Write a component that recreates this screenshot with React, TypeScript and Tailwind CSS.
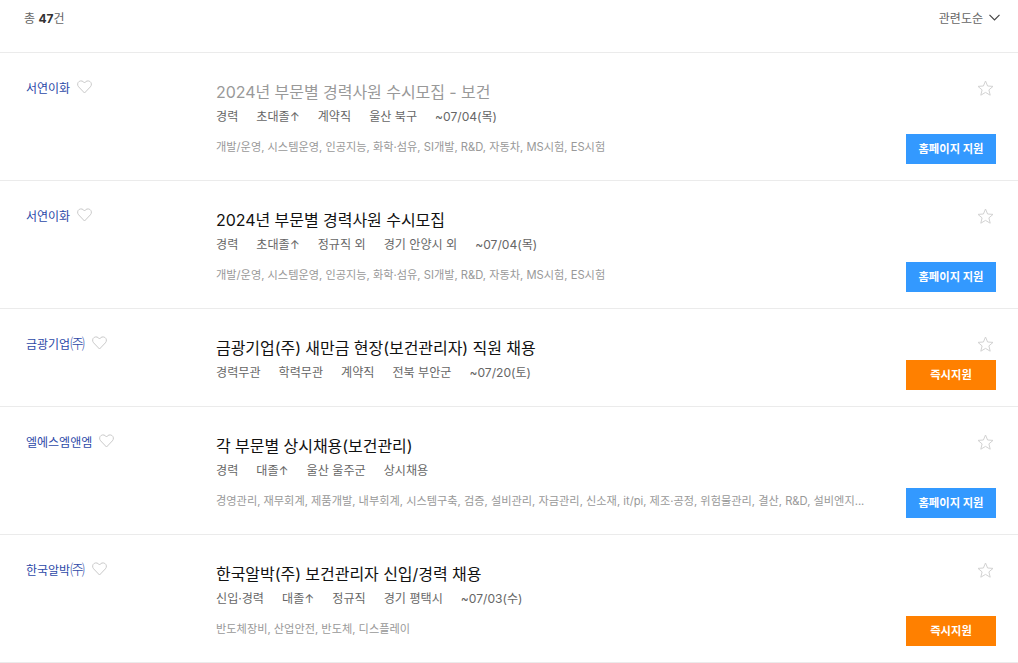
import React from "react";

interface Job {
  company: string;
  incorporated?: boolean;
  title: string;
  meta: string[];
  tags?: string;
  apply: "home" | "now";
  closed?: boolean;
}

const itTags = "개발/운영, 시스템운영, 인공지능, 화학·섬유, SI개발, R&D, 자동차, MS시험, ES시험";

const jobs: Job[] = [
  { company: "서연이화", title: "2024년 부문별 경력사원 수시모집 - 보건", meta: ["경력", "초대졸↑", "계약직", "울산 북구", "~07/04(목)"], tags: itTags, apply: "home", closed: true },
  { company: "서연이화", title: "2024년 부문별 경력사원 수시모집", meta: ["경력", "초대졸↑", "정규직 외", "경기 안양시 외", "~07/04(목)"], tags: itTags, apply: "home" },
  { company: "금광기업", incorporated: true, title: "금광기업(주) 새만금 현장(보건관리자) 직원 채용", meta: ["경력무관", "학력무관", "계약직", "전북 부안군", "~07/20(토)"], apply: "now" },
  { company: "엘에스엠앤엠", title: "각 부문별 상시채용(보건관리)", meta: ["경력", "대졸↑", "울산 울주군", "상시채용"], tags: "경영관리, 재무회계, 제품개발, 내부회계, 시스템구축, 검증, 설비관리, 자금관리, 신소재, it/pi, 제조·공정, 위험물관리, 결산, R&D, 설비엔지...", apply: "home" },
  { company: "한국알박", incorporated: true, title: "한국알박(주) 보건관리자 신입/경력 채용", meta: ["신입·경력", "대졸↑", "정규직", "경기 평택시", "~07/03(수)"], tags: "반도체장비, 산업안전, 반도체, 디스플레이", apply: "now" },
];

const Heart = () => (
  <svg width="15" height="14" viewBox="0 0 15 14" fill="none" stroke="#c9c9c9" strokeWidth="1" className="shrink-0">
    <path d="M7.5 13 L1.6 6.8 C0 5 0.4 2.6 2.2 1.4 C4 0.4 6.2 0.9 7.5 3 C8.8 0.9 11 0.4 12.8 1.4 C14.6 2.6 15 5 13.4 6.8 Z" />
  </svg>
);

const Star = () => (
  <svg width="17" height="16" viewBox="0 0 17 16" fill="none" stroke="#d2d2d2" strokeWidth="1">
    <path d="M8.5 1 L10.6 6 L16 6.4 L11.9 9.9 L13.2 15.2 L8.5 12.4 L3.8 15.2 L5.1 9.9 L1 6.4 L6.4 6 Z" />
  </svg>
);

function JobRow({ job }: { job: Job }) {
  return (
    <div className="flex border-b border-[#ebebeb] pl-[26px] pr-[22px]">
      <div className="w-[190px] shrink-0 pt-[27px] flex items-start gap-[7px]">
        <span className="text-[12px] leading-[16px] mt-[1px] text-[#2d49a8]">
          {job.company}
          {job.incorporated && <span className="text-[14.5px] leading-none font-light">㈜</span>}
        </span>
        <Heart />
      </div>
      <div className="flex-1 min-w-0 pt-[27px] pb-[23px]">
        <div className={`text-[16px] tracking-[-0.05px] leading-[24px] ${job.closed ? "text-[#999999]" : "text-[#111111]"}`}>{job.title}</div>
        <div className="mt-[3px] flex gap-[18px] text-[12.1px] leading-[20px] text-[#666666]">
          {job.meta.map((m) => (
            <span key={m}>{m}</span>
          ))}
        </div>
        {job.tags && (
          <div className="mt-[10px] whitespace-nowrap text-[11.2px] leading-[20px] text-[#999999]">{job.tags}</div>
        )}
      </div>
      <div className="w-[90px] shrink-0 pt-[27px] pb-[16px] flex flex-col items-end justify-between">
        <div className="pr-[2px]">
          <Star />
        </div>
        <button
          className={`w-[90px] h-[30px] text-[11.3px] font-bold text-white ${job.apply === "home" ? "bg-[#3399ff]" : "bg-[#ff8000]"}`}
        >
          {job.apply === "home" ? "홈페이지 지원" : "즉시지원"}
        </button>
      </div>
    </div>
  );
}

export default function App() {
  return (
    <div className="w-[1018px] h-[663px] overflow-hidden bg-white font-['Inter','Noto_Sans_CJK_KR',sans-serif]">
      <div className="h-[53px] border-b border-[#ebebeb] pl-[24px] pr-[18px] pt-[10px] flex justify-between items-start">
        <div className="text-[12px] leading-[17px] text-[#666666]">
          총 <b className="text-[#333333]">47</b>건
        </div>
        <div className="flex items-center gap-[6px] text-[12px] leading-[17px] text-[#666666]">
          관련도순
          <svg width="11" height="7" viewBox="0 0 11 7" fill="none" stroke="#444444" strokeWidth="1.2" className="-mt-[2px]">
            <path d="M0.5 0.8 L5.5 5.8 L10.5 0.8" />
          </svg>
        </div>
      </div>
      {jobs.map((job, i) => (
        <JobRow key={i} job={job} />
      ))}
    </div>
  );
}
